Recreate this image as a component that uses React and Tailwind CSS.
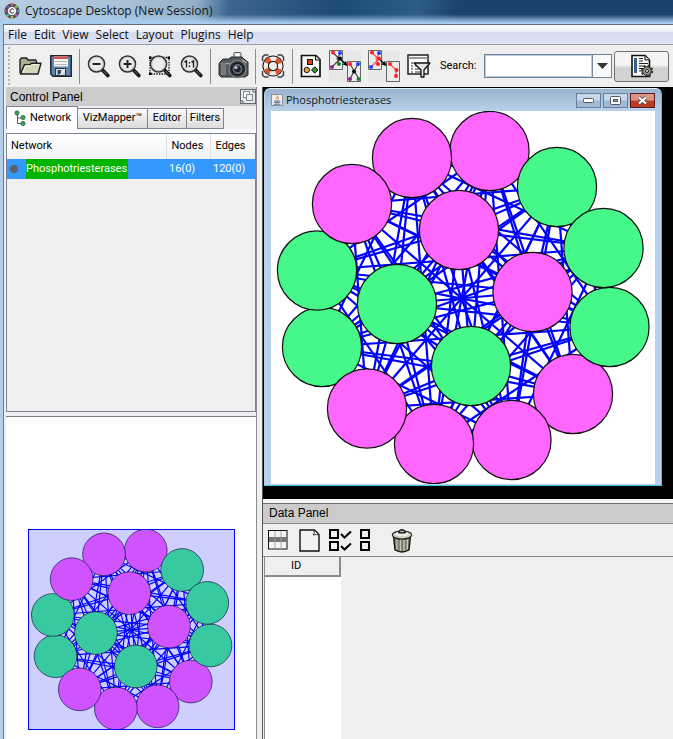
import React from "react";

const UI = "font-['Roboto','Noto_Sans',sans-serif]";

const MAGENTA = "#ff66ff";
const GREEN = "#46f88a";

const NODES = [
  [489.5, 151, MAGENTA],
  [557, 187, GREEN],
  [412, 158, MAGENTA],
  [573, 394, MAGENTA],
  [609.5, 327, GREEN],
  [603.5, 248, GREEN],
  [322, 347, GREEN],
  [317, 270.5, GREEN],
  [352, 204, MAGENTA],
  [511.5, 440, MAGENTA],
  [434, 444, MAGENTA],
  [367, 408.5, MAGENTA],
  [459, 230, MAGENTA],
  [532.5, 292, MAGENTA],
  [397, 304, GREEN],
  [471, 366, GREEN],
];

const EDGES = NODES.flatMap((a, i) => NODES.slice(i + 1).map((b) => [a, b]));

function Network({ className, label }) {
  return (
    <svg viewBox="271 111 384 373" className={className} role="img" aria-label={label}>
      <g stroke="#0000ff" strokeWidth="2.2">
        {EDGES.map(([a, b], i) => (
          <line key={i} x1={a[0]} y1={a[1]} x2={b[0]} y2={b[1]} />
        ))}
      </g>
      <g stroke="#111" strokeWidth="1.2">
        {NODES.map(([x, y, fill], i) => (
          <circle key={i} cx={x} cy={y} r="39.6" fill={fill} />
        ))}
      </g>
    </svg>
  );
}

function ToolButton({ label, children, className = "" }) {
  return (
    <button type="button" aria-label={label} className={`flex shrink-0 items-center justify-center ${className}`}>
      {children}
    </button>
  );
}

function Separator({ className = "" }) {
  return <div className={`h-[35px] w-px shrink-0 bg-[#8c8c8c] ${className}`} />;
}

function AppLogo() {
  const hues = ["#d05a50", "#8fc060", "#4a9ad0", "#a858b8", "#d8b050", "#58b0a0", "#b84a78", "#5a60c0"];
  return (
    <svg width="16" height="16" viewBox="0 0 16 16" className="shrink-0" aria-hidden="true">
      <circle cx="8" cy="8" r="7.5" fill="#4a4a52" />
      {hues.map((c, i) => (
        <rect key={c} x="6.8" y="0.6" width="2.4" height="3" fill={c} transform={`rotate(${i * 45} 8 8)`} />
      ))}
      <circle cx="8" cy="8" r="4.6" fill="#f2f2f2" stroke="#333" strokeWidth="0.6" />
      <path d="M9.800 6.800A2.100 2.100 0 1 0 9.800 9.200" fill="none" stroke="#222" strokeWidth="1" />
    </svg>
  );
}

function FolderIcon() {
  return (
    <svg width="24" height="20" viewBox="0 0 24 20">
      <path d="M2 17V3.5L3.5 2h5L10 4h7.5l1 1v3" fill="#a9b290" stroke="#222" strokeWidth="1.4" />
      <path d="M2.4 18 6.5 8.6H12l1.5-1.4H23L20 18Z" fill="#d0d6ba" stroke="#222" strokeWidth="1.4" strokeLinejoin="round" />
      <path d="M5 16 8 10h5l1.500-1.300H21" fill="none" stroke="#f6f8ea" strokeWidth="1" />
    </svg>
  );
}

function SaveIcon() {
  return (
    <svg width="22" height="22" viewBox="0 0 22 22">
      <path d="M.8.8h20.400v20.400H3L.8 19Z" fill="#5f87ab" stroke="#1c2630" strokeWidth="1.5" />
      <rect x="4" y="1.500" width="14" height="10" fill="#f6f6f6" />
      <path d="M4 1.500h14v2.500H4z" fill="#d85050" />
      <path d="M5 6.500h12M5 9.500h12" stroke="#b5b5b5" />
      <rect x="5.500" y="13.500" width="10" height="7" fill="#d8d8d8" stroke="#2c3a48" />
      <rect x="7.500" y="15" width="3.500" height="4.500" fill="#334a60" />
      <path d="m10 20 5-6" stroke="#fff" />
    </svg>
  );
}

function ZoomIcon({ kind }) {
  return (
    <svg width="23" height="24" viewBox="0 0 23 24">
      {kind === "fit" && (
        <rect x="1" y="3.500" width="19" height="16.500" fill="none" stroke="#000" strokeWidth="1.300" strokeDasharray="1.300 1.300" />
      )}
      {kind === "fit" && <path d="M0 2.500h2.500v2.500H0zM18.500 2.500H21v2.500h-2.500zM0 18.500h2.500V21H0z" fill="#000" />}
      <path d="m15 15.500 5.800 6" stroke="#161616" strokeWidth="3.600" strokeLinecap="round" />
      <path d="m16.500 17 3.500 3.500" stroke="#777" strokeWidth="1" />
      <circle cx="9.500" cy="10" r="8" fill="#ececec" stroke="#333" strokeWidth="1.600" />
      <circle cx="9.500" cy="10" r="6.700" fill="none" stroke="#c4c4c4" strokeWidth="1" />
      {kind === "out" && <path d="M5.500 10h8" stroke="#222" strokeWidth="2" />}
      {kind === "in" && <path d="M5.500 10h8M9.500 6v8" stroke="#222" strokeWidth="2" />}
      {kind === "one" && (
        <path d="M4.500 8 6.500 7v6.500M11.500 8l2-1v6.500M9.500 8v1.500M9.500 11.500V13" fill="none" stroke="#222" strokeWidth="1.400" />
      )}
    </svg>
  );
}

function CameraIcon() {
  return (
    <svg width="32" height="30" viewBox="0 0 32 30">
      <rect x="16" y="1.500" width="7" height="6" rx="1" fill="#e8e8e8" stroke="#555" />
      <path d="M18 3h3v3h-3z" fill="#fff" />
      <path d="M2 11 5 8h6l2-2h11l3 3 3 2v13l-3 2H3l-2-2V13Z" fill="#55595c" stroke="#25282a" />
      <path d="M2.500 12.500h10M24 9l5 3" stroke="#9ca0a2" strokeWidth="1.500" />
      <path d="M3 12v12h5V12Z" fill="#787c7e" />
      <circle cx="19.500" cy="18" r="8.500" fill="#2a2d30" stroke="#7b7f82" strokeWidth="1.400" />
      <circle cx="19.500" cy="18" r="5.600" fill="#606a74" stroke="#111" />
      <circle cx="19.500" cy="18" r="3.200" fill="#20262e" />
      <circle cx="18" cy="16.500" r="1.600" fill="#c2ccd6" />
    </svg>
  );
}

function LifebuoyIcon() {
  return (
    <svg width="24" height="24" viewBox="0 0 24 24">
      <path d="M1.500 7V3l2-2h4M16.500 1h4l2 2v4M22.500 17v4l-2 2h-4M7.500 23h-4l-2-2v-4" fill="none" stroke="#444" strokeWidth="1.500" />
      <circle cx="12" cy="12" r="10.600" fill="#222" />
      <circle cx="12" cy="12" r="7.200" fill="none" stroke="#f6f0ea" strokeWidth="4.600" />
      <circle cx="12" cy="12" r="7.200" fill="none" stroke="#e0532c" strokeWidth="4.600" strokeDasharray="5.600 5.710" strokeDashoffset="-2.900" />
      <circle cx="12" cy="12" r="4.600" fill="#eee" stroke="#222" strokeWidth="1.200" />
    </svg>
  );
}

function StyleIcon() {
  return (
    <svg width="22" height="24" viewBox="0 0 22 24">
      <path d="M1.500 1.500H16L20 5.500v17H1.500Z" fill="#f6f6f4" stroke="#111" strokeWidth="1.700" />
      <path d="M15.500 2v4H20" fill="#ddd" stroke="#111" />
      <rect x="7.500" y="5.500" width="5" height="5" fill="#d84020" stroke="#111" />
      <circle cx="6.800" cy="16" r="2.700" fill="#e8a838" stroke="#111" />
      <path d="m14.700 12.800 3.200 3.200-3.200 3.200-3.200-3.200Z" fill="#3a8a3a" stroke="#111" />
    </svg>
  );
}

function SubnetIcon({ second }) {
  const line = second ? "#ff5050" : "#444";
  return (
    <svg width="32" height="32" viewBox="0 0 32 32">
      <path d="M0 0h32v32H0z" fill="#e8e8e8" />
      <path d="M.5.5h13v19H.5zM18.500 11.500h13v20h-13z" fill="#ececec" stroke="#666" />
      <path d="m4 3 7 6-8 8M12 3 8 8l2 6" fill="none" stroke={line} strokeWidth="1.200" />
      {second ? (
        <path d="m22 14 6 6v5" fill="none" stroke={line} strokeWidth="1.200" />
      ) : (
        <path d="m21 14 9 15M29 14l-8 15" fill="none" stroke={line} strokeWidth="1.200" />
      )}
      <path d="m12 10 5 4" stroke="#000" strokeWidth="1.500" />
      <path d="m18.500 16-5-1.500 3.500-3.500Z" fill="#000" />
      <circle cx="4" cy="2.500" r="2" fill="#ff2020" />
      <circle cx="11" cy="3" r="2" fill="#2040ff" />
      <circle cx="11" cy="8.500" r="2" fill={second ? "#ff2020" : "#000"} />
      <circle cx="10" cy="14" r="2" fill={second ? "#ff2020" : "#108828"} />
      <circle cx="3" cy="17" r="2" fill={second ? "#2040ff" : "#902090"} />
      {second ? (
        <g fill="#ff2020">
          <circle cx="22" cy="14" r="2" />
          <circle cx="28.500" cy="20" r="2" />
          <circle cx="28" cy="26" r="2" />
        </g>
      ) : (
        <g>
          <circle cx="21" cy="14" r="2" fill="#ff2020" />
          <circle cx="29" cy="14" r="2" fill="#2040ff" />
          <circle cx="25" cy="21.500" r="2" fill="#000" />
          <circle cx="21" cy="29" r="2" fill="#902090" />
          <circle cx="29.500" cy="29" r="2" fill="#108828" />
        </g>
      )}
    </svg>
  );
}

function FilterIcon() {
  return (
    <svg width="24" height="24" viewBox="0 0 24 24">
      <rect x="1" y="1" width="20" height="19" fill="#fafafa" stroke="#222" strokeWidth="1.500" />
      <path d="M1.500 4h19" stroke="#999" strokeWidth="2" />
      <path d="M4 9h2M4 12h2M4 15h2M4 18h2M8 12h4M8 15h6M8 18h6" stroke="#334" strokeWidth="1.200" />
      <path d="M7 9h16l-6 7v7h-3v-7Z" fill="#e4e4e4" stroke="#111" strokeWidth="1.300" strokeLinejoin="round" />
    </svg>
  );
}

function ConfigureIcon() {
  return (
    <svg width="24" height="24" viewBox="0 0 24 24">
      <path d="M2 1.500h13L19.500 6v16.500H2Z" fill="#fbfbfb" stroke="#111" strokeWidth="1.600" />
      <path d="M15 2v4h4.500" fill="#ddd" stroke="#111" />
      <path d="M4 4h3v15H4z" fill="#3a6088" />
      <path d="M9 4.500h4M9 7h4M9 9.500h9M9 12h6M9 14.500h4M9 17h3" stroke="#222" strokeWidth="1.200" />
      <circle cx="17" cy="17" r="5" fill="none" stroke="#333" strokeWidth="2.500" strokeDasharray="2 1.920" />
      <circle cx="17" cy="17" r="4.300" fill="#999486" stroke="#222" />
      <circle cx="17" cy="17" r="1.500" fill="#eee" stroke="#222" />
    </svg>
  );
}

function TreeIcon() {
  return (
    <svg width="12" height="17" viewBox="0 0 12 17" aria-hidden="true">
      <path d="M3.500 3v10.500H8M3.500 8H8" fill="none" stroke="#555" />
      <g fill="#3d9a58" stroke="#1f6a38" strokeWidth="0.600">
        <circle cx="3" cy="3" r="2.200" />
        <circle cx="9" cy="7.500" r="2.200" />
        <circle cx="9" cy="13.500" r="2.200" />
      </g>
    </svg>
  );
}

function FloatIcon() {
  return (
    <svg width="16" height="15" viewBox="0 0 16 15">
      <rect x="0.500" y="0.500" width="15" height="14" fill="#e6e8ea" stroke="#666" />
      <rect x="3.500" y="2.500" width="6" height="6" fill="#fff" stroke="#7a8aa4" />
      <rect x="6.500" y="5.500" width="6" height="6" fill="#f4f0d8" stroke="#7a8aa4" />
      <path d="M12 2h2v2M2 11v2h2" fill="none" stroke="#556" />
    </svg>
  );
}

function JavaIcon() {
  return (
    <svg width="12" height="12" viewBox="0 0 12 12" className="shrink-0" aria-hidden="true">
      <rect x="0.500" y="0.500" width="11" height="11" fill="#f0f0ee" stroke="#8a9098" />
      <path d="M6 1.500c2 1.500-2 2 0 4M7.500 3c-1.500 1 .5 1.500-.5 2.500" fill="none" stroke="#e07020" />
      <path d="M3 7h5.500M3.500 8.500h4.500M2.500 10.200h7M8.500 7q1.500 0 0 1.500" fill="none" stroke="#3a5a80" strokeWidth="0.900" />
    </svg>
  );
}

function TrashIcon() {
  return (
    <svg width="22" height="25" viewBox="0 0 22 25">
      <path d="M2.500 8.500 4 22q7 4 14 0l1.500-13.500Z" fill="#77766a" stroke="#111" strokeWidth="1.300" />
      <path d="M6 11.500v10M9.500 12v11M13 12v11M16.300 11.500v10" stroke="#c8c7b8" strokeWidth="1.400" />
      <ellipse cx="11" cy="7" rx="9.700" ry="4" fill="#d2d0c0" stroke="#222" strokeWidth="1.200" />
      <ellipse cx="11" cy="6" rx="6.500" ry="2.300" fill="#efeee4" />
      <path d="M7.500 5q0-3.500 3.500-3.500T14.500 5Z" fill="#444" stroke="#111" />
      <path d="M9.500 3.500h3" stroke="#ddd" />
    </svg>
  );
}

function TitleBar() {
  return (
    <header className="flex h-6 items-center gap-[5px] bg-[linear-gradient(to_bottom,transparent_60%,#a9cdf0_96%),linear-gradient(100deg,#b8cde0_0%,#a9c1d8_18%,#93afc9_29%,#3d668e_34%,#1d4b78_50%,#2d5c88_62%,#1a426b_68%,#1a426b_100%)] pl-1 pb-[2px]">
      <AppLogo />
      <h1 className="font-['Open_Sans',sans-serif] text-xs text-[#101820]">Cytoscape Desktop (New Session)</h1>
    </header>
  );
}

function MenuBar() {
  return (
    <nav className="flex h-[21px] items-center gap-[7px] border-y border-t-[#5f6b7a] border-b-[#9a9da5] bg-[linear-gradient(to_bottom,#fdfdff_0%,#eceff8_35%,#d5dbee_38%,#e0e5f3_100%)] px-1 font-['Open_Sans',sans-serif] text-xs text-[#111]">
      {["File", "Edit", "View", "Select", "Layout", "Plugins", "Help"].map((m) => (
        <button key={m} type="button">{m}</button>
      ))}
    </nav>
  );
}

function Toolbar() {
  return (
    <div className="flex h-[42px] shrink-0 items-center bg-[#efefef] pl-1">
      <div className="h-[38px] w-[2px] shrink-0 bg-[repeating-linear-gradient(to_bottom,#b4b4b4_0px,#b4b4b4_2px,#efefef_2px,#efefef_4px)]" />
      <div className="ml-2 flex gap-2">
        <ToolButton label="Open session"><FolderIcon /></ToolButton>
        <ToolButton label="Save session"><SaveIcon /></ToolButton>
      </div>
      <Separator className="mx-[7px]" />
      <div className="flex gap-2">
        <ToolButton label="Zoom out"><ZoomIcon kind="out" /></ToolButton>
        <ToolButton label="Zoom in"><ZoomIcon kind="in" /></ToolButton>
        <ToolButton label="Fit to selection"><ZoomIcon kind="fit" /></ToolButton>
        <ToolButton label="Actual size"><ZoomIcon kind="one" /></ToolButton>
      </div>
      <Separator className="mx-[7px]" />
      <ToolButton label="Export snapshot"><CameraIcon /></ToolButton>
      <Separator className="mx-[5px]" />
      <ToolButton label="Help"><LifebuoyIcon /></ToolButton>
      <Separator className="mx-[7px]" />
      <div className="flex items-center gap-[7px]">
        <ToolButton label="Visual styles"><StyleIcon /></ToolButton>
        <ToolButton label="Create subnetwork"><SubnetIcon /></ToolButton>
        <ToolButton label="Create subnetwork from edges"><SubnetIcon second /></ToolButton>
        <ToolButton label="Filters"><FilterIcon /></ToolButton>
      </div>
      <label htmlFor="search" className={`ml-[9px] w-11 shrink-0 text-[11px] text-black ${UI}`}>Search:</label>
      <div className="flex h-6 min-w-0 flex-1 border border-[#6f8397]">
        <input id="search" type="text" className="min-w-0 flex-1 border border-[#b8cfe5] bg-white px-1 text-[11px] outline-none" />
        <button type="button" aria-label="Search history" className="flex w-[19px] items-center justify-center border-l border-[#7a8a99] bg-[#fafafa]">
          <svg width="11" height="6" viewBox="0 0 11 6"><path d="M0 0h11L5.500 6Z" fill="#333" /></svg>
        </button>
      </div>
      <button type="button" aria-label="Configure search" className="mr-1 ml-0.5 flex h-[31px] w-[55px] shrink-0 items-center justify-center rounded-[3px] border border-[#707070] bg-linear-to-b from-[#f4f4f4] from-45% to-[#d2d2d2] to-55%">
        <ConfigureIcon />
      </button>
    </div>
  );
}

function ControlPanel() {
  const tab = "-ml-px h-[21px] border border-[#7c8494] bg-linear-to-b from-[#fafafa] to-[#dcdcdc]";
  return (
    <aside className="flex w-[253px] shrink-0 flex-col border-r border-[#8a8a92] bg-[#efefef] pl-0.5">
      <div className="flex h-[19px] items-center justify-between bg-[#cbcbcb] pl-1">
        <h2 className="font-['Liberation_Sans',Arial,sans-serif] text-xs text-black">Control Panel</h2>
        <button type="button" aria-label="Float panel"><FloatIcon /></button>
      </div>
      <div className={`flex h-[23px] items-end text-[11px] text-black ${UI}`} role="tablist">
        <button type="button" role="tab" aria-selected="true" className="flex h-[23px] w-[72px] items-center gap-1 border-x border-t border-[#7c8494] bg-white pl-[7px]">
          <TreeIcon />
          Network
        </button>
        <button type="button" role="tab" aria-selected="false" className={`w-[71px] ${tab}`}>VizMapper™</button>
        <button type="button" role="tab" aria-selected="false" className={`w-10 ${tab}`}>Editor</button>
        <button type="button" role="tab" aria-selected="false" className={`w-[38px] ${tab}`}>Filters</button>
      </div>
      <div className="h-1 bg-[#fbfbfb]" />
      <div className="h-[279px] border border-[#7c8494] bg-[#efefef]">
        <table className={`w-full table-fixed border-collapse text-[11px] ${UI}`}>
          <colgroup>
            <col />
            <col className="w-11" />
            <col className="w-[45px]" />
          </colgroup>
          <thead>
            <tr className="h-[25px] bg-linear-to-b from-white to-[#f2f3f5] text-left text-black">
              <th className="border-r border-[#dcdfe4] py-0 pl-1 font-normal">Network</th>
              <th className="border-r border-[#dcdfe4] py-0 pl-[5px] font-normal">Nodes</th>
              <th className="py-0 pl-[5px] font-normal">Edges</th>
            </tr>
          </thead>
          <tbody>
            <tr className="h-5 bg-[#3399ff] text-white">
              <td className="p-0">
                <div className="flex items-center gap-2 pl-[3px]">
                  <span className="size-2 rounded-full bg-[#606068]" />
                  <span className="bg-[#00b400] pr-px leading-5">Phosphotriesterases</span>
                </div>
              </td>
              <td className="py-0 pl-[3px]">16(0)</td>
              <td className="py-0 pl-[3px]">120(0)</td>
            </tr>
          </tbody>
        </table>
      </div>
      <div className="mt-1 h-px bg-[#7a7a7a]" />
      <div className="flex flex-1 flex-col items-center justify-end bg-white pb-[9px]">
        <div className="relative w-[207px]">
          <Network className="block w-full" label="Network overview" />
          <div className="absolute inset-0 bg-[#0000ff]/19 ring-1 ring-[#0000ff] ring-inset" />
        </div>
      </div>
    </aside>
  );
}

function NetworkWindow() {
  const ctl = "flex h-[15px] w-[25px] items-center justify-center border border-[#6b7f99] bg-linear-to-b from-[#c6d8ea] from-45% to-[#9fbad5] to-55%";
  return (
    <section className="rounded-t-md border border-t-[#dff0fb] border-r-[#3ecbe0] border-b-[#3ecbe0] border-l-[#b9d1ea] bg-[linear-gradient(to_bottom,#9ab4d0_0px,#b9d1ea_22px)] px-1.5 pb-px">
      <div className="flex h-[22px] items-center gap-[3px]">
        <JavaIcon />
        <h2 className="flex-1 font-['Open_Sans',sans-serif] text-[11px] text-[#101820]">Phosphotriesterases</h2>
        <div className="flex gap-0.5">
          <button type="button" aria-label="Minimize" className={ctl}>
            <svg width="11" height="5" viewBox="0 0 11 5"><rect x="0.500" y="0.500" width="10" height="4" rx="1" fill="#fff" stroke="#555" /></svg>
          </button>
          <button type="button" aria-label="Maximize" className={ctl}>
            <svg width="11" height="9" viewBox="0 0 11 9"><rect x="0.500" y="0.500" width="10" height="8" rx="1" fill="#fff" stroke="#556" /><rect x="3.500" y="3.500" width="4" height="2" fill="#8fa8c4" stroke="#556" /></svg>
          </button>
          <button type="button" aria-label="Close" className="flex h-[15px] w-[25px] items-center justify-center border border-[#5a1c1c] bg-linear-to-b from-[#dc9484] from-45% to-[#bc3a22] to-55%">
            <svg width="11" height="9" viewBox="0 0 11 9"><path d="m2 1.500 7 6M9 1.500l-7 6" stroke="#555" strokeWidth="3.800" /><path d="m2 1.500 7 6M9 1.500l-7 6" stroke="#fff" strokeWidth="2.200" /></svg>
          </button>
        </div>
      </div>
      <Network className="block w-full bg-white" label="Phosphotriesterases network" />
    </section>
  );
}

function DataPanel() {
  return (
    <section className="flex flex-1 flex-col bg-[#efefef]">
      <h2 className="h-[21px] border-y border-t-[#6e6e6e] border-b-[#8a8a92] bg-[#cbcbcb] pl-1.5 font-['Liberation_Sans',Arial,sans-serif] text-xs leading-[19px] text-black">
        Data Panel
      </h2>
      <div className="flex h-[33px] items-center border-b border-[#8a8a92] pl-[5px]">
        <ToolButton label="Select attributes">
          <svg width="20" height="20" viewBox="0 0 20 20">
            <rect x="0.500" y="0.500" width="18.500" height="18.500" fill="#f4f4f4" stroke="#111" />
            <path d="M7 1v18M13 1v18" stroke="#aaa" />
            <path d="M1 7h18v5H1z" fill="#777" />
            <path d="M7 7v5M13 7v5" stroke="#999" />
          </svg>
        </ToolButton>
        <ToolButton label="Create attribute" className="ml-[11px]">
          <svg width="21" height="23" viewBox="0 0 21 23">
            <path d="M1 1h14.500L20 5.500V22H1Z" fill="#f2f2f0" stroke="#111" strokeWidth="1.400" />
            <path d="M15 1q1 4-1 5 4-1 6 0Z" fill="#fff" stroke="#333" />
          </svg>
        </ToolButton>
        <ToolButton label="Select all attributes" className="ml-[9px]">
          <svg width="23" height="22" viewBox="0 0 23 22">
            <path d="M1 1h8v8H1zM1 13h8v8H1zM12 5l3.500 3.500L22 2.500M12 17l3.500 3.500 6.500-6" fill="none" stroke="#000" strokeWidth="2" />
          </svg>
        </ToolButton>
        <ToolButton label="Unselect all attributes" className="ml-[8px]">
          <svg width="10" height="22" viewBox="0 0 10 22">
            <path d="M1 1h8v8H1zM1 13h8v8H1z" fill="none" stroke="#000" strokeWidth="2" />
          </svg>
        </ToolButton>
        <ToolButton label="Delete attributes" className="ml-[21px]"><TrashIcon /></ToolButton>
      </div>
      <div className="ml-px flex w-[77px] flex-1 flex-col border-l border-[#8a8a92] bg-white">
        <table className={`w-full border-collapse text-[11px] text-black ${UI}`}>
          <thead>
            <tr>
              <th className="h-[19px] border-r-2 border-b-2 border-[#8a8a8a] bg-[#efefef] p-0 pr-3 font-normal leading-4">ID</th>
            </tr>
          </thead>
        </table>
      </div>
    </section>
  );
}

export default function App() {
  return (
    <div className="flex min-h-screen flex-col bg-[#b4cfe9]">
      <TitleBar />
      <div className="ml-[3px] flex flex-1 flex-col border-l border-[#6f7b8a] bg-[#efefef]">
        <MenuBar />
        <Toolbar />
        <div className="flex flex-1">
          <ControlPanel />
          <main className="ml-[5px] flex min-w-0 flex-1 flex-col border-l border-[#555]">
            <div className="bg-black pt-px pr-[11px] pb-[13px] pl-px">
              <NetworkWindow />
            </div>
            <div className="h-1 bg-[#f4f4f4]" />
            <DataPanel />
          </main>
        </div>
      </div>
    </div>
  );
}
